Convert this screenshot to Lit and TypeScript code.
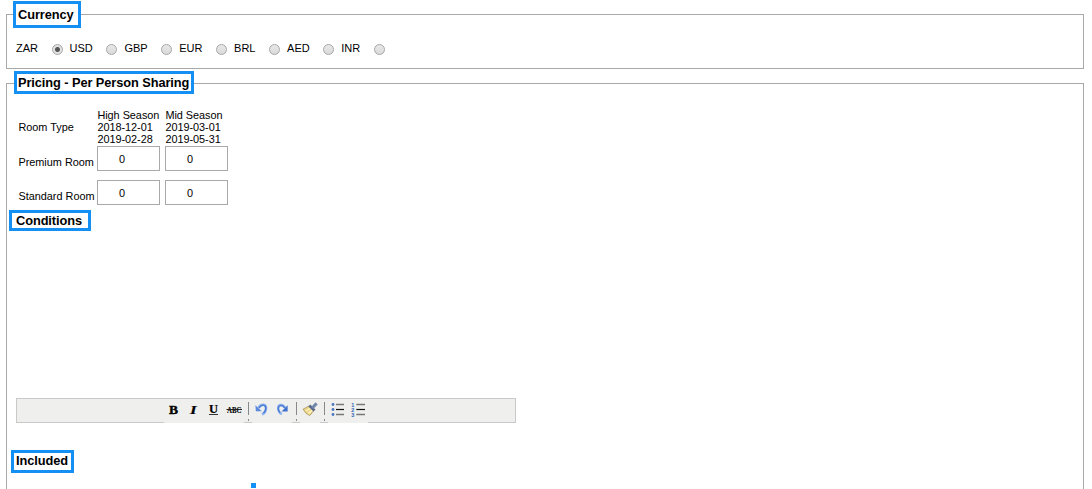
import { LitElement, html, css, svg, nothing } from 'lit';
import { customElement, property, state } from 'lit/decorators.js';

const CURRENCIES = ['ZAR', 'USD', 'GBP', 'EUR', 'BRL', 'AED', 'INR'];

const SEASONS = [
  { name: 'High Season', from: '2018-12-01', to: '2019-02-28' },
  { name: 'Mid Season', from: '2019-03-01', to: '2019-05-31' },
];

const ROOMS = ['Premium Room', 'Standard Room'];

const TOOLS = ['bold', 'italic', 'underline', 'strike', '|', 'undo', 'redo', '|', 'clean', '|', 'ul', 'ol'];

// icons share a 20x24 cell
const icons: Record<string, unknown> = {
  bold: svg`<text class="g" x="5" y="15" textLength="9" lengthAdjust="spacingAndGlyphs">B</text>`,
  italic: svg`<text class="g i" x="6" y="15" textLength="6.6" lengthAdjust="spacingAndGlyphs">I</text>`,
  underline: svg`<text class="g u" x="5" y="14" textLength="9" lengthAdjust="spacingAndGlyphs">U</text>
    <path d="M5 15.5H14" stroke="#333" />`,
  strike: svg`<text class="g s" x="3" y="14" textLength="14.5" lengthAdjust="spacingAndGlyphs">ABC</text>
    <path d="M2.5 10.5H18" stroke="#222" />`,
  undo: svg`<path d="M6.5 8.8C8.5 4.8 14 4.6 14 9C14 11.8 12.3 14.3 10 15.5" fill="none" stroke="#8fb2ed" stroke-width="2.6" />
    <path d="M7 9C9.5 4.9 14.2 5.4 13.8 9.8C13.6 11.5 12.6 13 11.4 14" fill="none" stroke="#4678d4" stroke-width="1.3" />
    <path d="M3.4 6.2L3.9 12.2H9.8Z" fill="#5b88df" />`,
  redo: svg`<path d="M13.2 8.8C11 4.8 6 5 6.1 9.2C6.2 11.6 7.6 13.9 9.8 15.2" fill="none" stroke="#8fb2ed" stroke-width="2.4" />
    <path d="M12.6 8.8C10.5 5.4 6.4 5.9 6.2 9.8C6.3 11.2 7 12.6 8 13.4" fill="none" stroke="#4678d4" stroke-width="1.3" />
    <path d="M15.6 6.2V12.4H9.6Z" fill="#3f70cf" />`,
  clean: svg`<path d="M3 10.2L9 7L14 11.4L9.8 16.6Q5.5 15 3 10.2Z" fill="#ead58b" stroke="#a08a55" stroke-width=".7" />
    <path d="M6 12L10.5 9M8.3 14.4L12.4 11" stroke="#fff5bd" stroke-width="1.4" />
    <path d="M9.3 6.4L14.5 11.4" stroke="#566988" stroke-width="2.8" />
    <path d="M12.2 9L16.6 4.4" stroke="#7186aa" stroke-width="3" />`,
  ul: svg`<circle cx="5" cy="5.5" r="1.4" fill="#4b76bd" /><circle cx="5" cy="10.5" r="1.4" fill="#4b76bd" /><circle cx="5" cy="15.5" r="1.4" fill="#4b76bd" />
    <path d="M8 5.5H16M8 15.5H16" stroke="#777" stroke-width="1.3" /><path d="M8 10.5H16" stroke="#111" stroke-width="1.2" />`,
  ol: svg`<text class="n" x="3.2" y="7.6">1</text><text class="n" x="3.2" y="12.6">2</text><text class="n" x="3.2" y="17.6">3</text>
    <path d="M8.3 5.5H17M8.3 15.5H17" stroke="#777" stroke-width="1.3" /><path d="M8.3 10.5H17" stroke="#111" stroke-width="1.2" />`,
};

@customElement('editor-toolbar')
export class EditorToolbar extends LitElement {
  static styles = css`
    :host {
      display: flex;
      box-sizing: border-box;
      width: 500px;
      height: 25px;
      padding-left: 147px;
      border: 1px solid #c9c9c9;
      background: #efefed;
    }
    .tool {
      width: 20px;
      height: 24px;
      background: #efefed;
    }
    svg {
      display: block;
      overflow: visible;
    }
    .sep {
      width: 8px;
      height: 23px;
    }
    .g {
      font: bold 12px 'Liberation Serif', serif;
      fill: #000;
      stroke: #000;
      stroke-width: 0.4;
    }
    .i {
      font-style: italic;
      stroke-width: 0.2;
    }
    .u {
      font-size: 11.5px;
      stroke-width: 0.2;
    }
    .s {
      font-size: 8px;
      stroke-width: 0.1;
    }
    .n {
      font: bold 5.5px 'Liberation Sans', sans-serif;
      fill: #3565b8;
    }
  `;

  render() {
    return TOOLS.map((t) =>
      t === '|'
        ? html`<svg class="sep" width="8" height="23">
            <path d="M4.5 3V16M4.5 20V22" stroke="#888" />
          </svg>`
        : html`<div class="tool"><svg width="20" height="24">${icons[t] ?? nothing}</svg></div>`,
    );
  }
}

@customElement('price-table')
export class PriceTable extends LitElement {
  @property({ attribute: false }) rooms: string[] = [];

  static styles = css`
    :host {
      display: grid;
      grid-template-columns: 74px 63px 63px;
      grid-template-rows: 37px 34px 25px;
      column-gap: 5px;
      width: max-content;
      font-size: 10.88px;
      line-height: 12px;
    }
    .type {
      padding: 12px 0 0 0.4px;
    }
    .head {
      padding-left: 0.4px;
      white-space: nowrap;
      letter-spacing: -0.03px;
    }
    .room {
      padding: 10px 0 0 0.4px;
      white-space: nowrap;
    }
    input {
      display: block;
      box-sizing: border-box;
      width: 63px;
      height: 25px;
      margin: 0;
      padding: 1px 13px 0 0;
      border: 1px solid #a9a9a9;
      background: #fff;
      color: #000;
      font: inherit;
      text-align: center;
      outline: none;
    }
  `;

  render() {
    return html`
      <div class="type">Room Type</div>
      ${SEASONS.map((s) => html`<div class="head">${s.name}<br />${s.from}<br />${s.to}</div>`)}
      ${this.rooms.map(
        (r) => html`<div class="room">${r}</div>
          ${SEASONS.map(() => html`<div><input type="text" value="0" /></div>`)}`,
      )}
    `;
  }
}

@customElement('app-root')
export class AppRoot extends LitElement {
  @state() private currency = 'ZAR';

  static styles = css`
    :host {
      display: block;
      box-sizing: border-box;
      height: 489px;
      padding: 14px 8px 0 6px;
      overflow: hidden;
      background: #fff;
      color: #000;
      font: 11px 'Liberation Sans', Arial, sans-serif;
    }
    .panel {
      box-sizing: border-box;
      border: 1px solid #a9a9a9;
    }
    .currency {
      height: 55px;
      margin-bottom: 14px;
    }
    .pricing {
      height: 420px;
    }
    .title {
      box-sizing: border-box;
      width: max-content;
      border: 3px solid #1490f5;
      background: #fff;
      font-size: 12.8px;
      font-weight: bold;
      letter-spacing: -0.08px;
      white-space: nowrap;
    }
    .currency .title {
      width: 68px;
      height: 27px;
      margin: -14px 0 0 6px;
      padding-left: 2px;
      line-height: 22px;
    }
    .pricing .legend {
      width: 180px;
      height: 23px;
      margin: -13px 0 0 7px;
      padding-left: 1px;
      line-height: 18px;
    }
    .radios {
      display: flex;
      align-items: center;
      margin: 13px 0 0 9px;
    }
    .radios label {
      display: flex;
      align-items: center;
      height: 14px;
      margin-right: 7.1px;
    }
    .radio {
      box-sizing: border-box;
      width: 11px;
      height: 11px;
      margin: 2px 0 0 13.5px;
      border: 1px solid #a6a6a6;
      border-radius: 50%;
      background: linear-gradient(#e8e8e8, #dadada);
    }
    .radio.on {
      background: radial-gradient(circle, #555 0 2px, #e2e2e2 3px);
    }
    price-table {
      margin: 15px 0 0 11px;
    }
    .conditions {
      width: 82px;
      height: 21px;
      margin: 5px 0 0 2px;
      padding-left: 4px;
      line-height: 15px;
    }
    editor-toolbar {
      margin: 167px 0 0 9px;
    }
    .included {
      width: 63px;
      height: 23px;
      margin: 27px 0 0 4px;
      padding-left: 2px;
      line-height: 16px;
    }
    .handle {
      width: 5px;
      height: 5px;
      margin: 10px 0 0 244px;
      background: #1490f5;
    }
  `;

  render() {
    return html`
      <section class="panel currency">
        <div class="title">Currency</div>
        <div class="radios">
          ${CURRENCIES.map(
            (c) => html`<label @click=${() => (this.currency = c)}>
              ${c}<span class="radio ${c === this.currency ? 'on' : ''}"></span>
            </label>`,
          )}
        </div>
      </section>
      <section class="panel pricing">
        <div class="title legend">Pricing - Per Person Sharing</div>
        <price-table .rooms=${ROOMS}></price-table>
        <div class="title conditions">Conditions</div>
        <editor-toolbar></editor-toolbar>
        <div class="title included">Included</div>
        <div class="handle"></div>
      </section>
    `;
  }
}

declare global {
  interface HTMLElementTagNameMap {
    'app-root': AppRoot;
    'price-table': PriceTable;
    'editor-toolbar': EditorToolbar;
  }
}
